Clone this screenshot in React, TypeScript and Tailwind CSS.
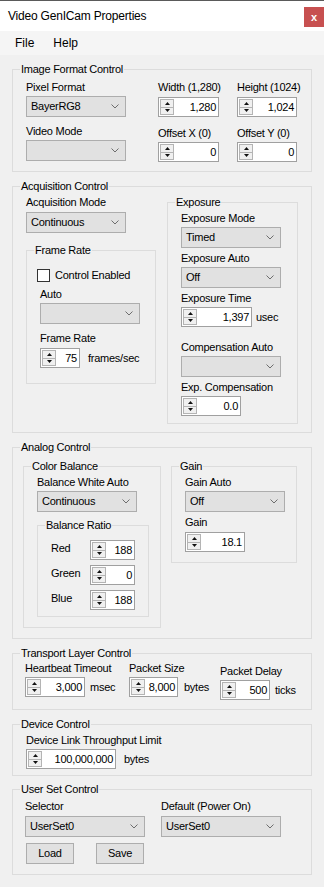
import React from "react";

const Chevron = () => (
  <svg width="8" height="5" viewBox="0 0 8 5" className="shrink-0">
    <polyline points="0.5,0.5 4,4 7.5,0.5" fill="none" stroke="#6d6d6d" strokeWidth="1" />
  </svg>
);

function Combo({ value = "", w = "w-[100px]" }: { value?: string; w?: string }) {
  return (
    <div className={`${w} h-[21px] bg-[#e1e1e1] border border-[#adadad] flex items-center justify-between pl-[4px] pr-[6px] shrink-0`}>
      <span className="leading-[13px] whitespace-nowrap">{value}</span>
      <Chevron />
    </div>
  );
}

function Spin({ value, w }: { value: string; w: string }) {
  return (
    <div className={`${w} h-[20px] bg-white border border-[#a0a0a0] flex items-stretch p-px shrink-0`}>
      <div className="w-[14px] flex flex-col border border-[#b4b4b4] bg-[#f0f0f0]">
        <div className="flex-1 flex items-center justify-center">
          <svg width="5" height="3" viewBox="0 0 5 3">
            <polygon points="2.5,0 5,3 0,3" fill="#111" />
          </svg>
        </div>
        <div className="h-px bg-[#b4b4b4]" />
        <div className="flex-1 flex items-center justify-center">
          <svg width="5" height="3" viewBox="0 0 5 3">
            <polygon points="0,0 5,0 2.5,3" fill="#111" />
          </svg>
        </div>
      </div>
      <div className="flex-1 text-right pr-[1px] leading-[16px] whitespace-nowrap">{value}</div>
    </div>
  );
}

function Label({ children, className = "" }: { children: React.ReactNode; className?: string }) {
  return <div className={`h-[13px] leading-[13px] whitespace-nowrap ${className}`}>{children}</div>;
}

function Group({ label, className = "", children }: { label: string; className?: string; children?: React.ReactNode }) {
  return (
    <div className={`relative border border-[#dcdcdc] shrink-0 ${className}`}>
      <span className="absolute left-[7px] top-[-7px] px-px bg-[#f0f0f0] leading-[13px] whitespace-nowrap">{label}</span>
      {children}
    </div>
  );
}

function Button({ children, className = "" }: { children: React.ReactNode; className?: string }) {
  return (
    <div className={`w-[48px] h-[21px] bg-[#e1e1e1] border border-[#adadad] flex items-center justify-center leading-[13px] ${className}`}>
      {children}
    </div>
  );
}

export default function App() {
  return (
    <div className="w-[324px] h-[887px] bg-[#f0f0f0] text-black text-[11px] tracking-[-0.25px] font-['Liberation_Sans',Arial,sans-serif] overflow-hidden">
      {/* Title bar */}
      <div className="h-[31px] bg-white border-t border-[#5a5a5a] flex items-start">
        <div className="ml-[8px] mt-[7px] text-[12px] leading-[16px] tracking-[-0.2px]">Video GenICam Properties</div>
        <div className="ml-auto mt-[6px] w-[20px] h-[20px] bg-[#c75050] flex items-center justify-center text-white text-[11px] font-bold leading-none">
          x
        </div>
      </div>
      {/* Menu bar */}
      <div className="h-[24px] bg-[#f5f5f5] flex items-center text-[12px] tracking-normal">
        <span className="ml-[15px]">File</span>
        <span className="ml-[19px]">Help</span>
      </div>

      <div className="flex flex-col pl-[12px]">
        {/* Image Format Control */}
        <Group label="Image Format Control" className="mt-[14px] w-[300px] h-[103px]">
          <div className="flex pl-[13px] pt-[11px]">
            <div className="w-[100px] flex flex-col">
              <Label>Pixel Format</Label>
              <div className="mt-[2px]"><Combo value="BayerRG8" /></div>
              <Label className="mt-[8px]">Video Mode</Label>
              <div className="mt-[2px]"><Combo /></div>
            </div>
            <div className="ml-[32px] w-[61px] flex flex-col">
              <Label>Width (1,280)</Label>
              <div className="mt-[3px]"><Spin value="1,280" w="w-[61px]" /></div>
              <Label className="mt-[10px]">Offset X (0)</Label>
              <div className="mt-[2px]"><Spin value="0" w="w-[61px]" /></div>
            </div>
            <div className="ml-[18px] w-[60px] flex flex-col">
              <Label>Height (1024)</Label>
              <div className="mt-[3px]"><Spin value="1,024" w="w-[60px]" /></div>
              <Label className="mt-[10px]">Offset Y (0)</Label>
              <div className="mt-[2px]"><Spin value="0" w="w-[60px]" /></div>
            </div>
          </div>
        </Group>

        {/* Acquisition Control */}
        <Group label="Acquisition Control" className="mt-[14px] w-[300px] h-[247px]">
          <div className="flex items-start pl-[13px]">
            <div className="mt-[9px] w-[130px] flex flex-col">
              <Label>Acquisition Mode</Label>
              <div className="mt-[3px]"><Combo value="Continuous" /></div>
              <Group label="Frame Rate" className="mt-[17px] w-[130px] h-[134px]">
                <div className="flex flex-col pt-[18px]">
                  <div className="flex items-center ml-[10px] h-[13px]">
                    <div className="w-[13px] h-[13px] bg-white border border-[#333333]" />
                    <span className="ml-[5px] leading-[13px]">Control Enabled</span>
                  </div>
                  <Label className="mt-[6px] ml-[13px]">Auto</Label>
                  <div className="mt-[2px] ml-[13px]"><Combo /></div>
                  <Label className="mt-[8px] ml-[13px]">Frame Rate</Label>
                  <div className="mt-[3px] ml-[13px] flex items-center">
                    <Spin value="75" w="w-[40px]" />
                    <span className="ml-[8px] leading-[13px]">frames/sec</span>
                  </div>
                </div>
              </Group>
            </div>
            <Group label="Exposure" className="mt-[15px] ml-[11px] w-[131px] h-[222px]">
              <div className="flex flex-col pl-[13px] pt-[9px]">
                <Label>Exposure Mode</Label>
                <div className="mt-[2px]"><Combo value="Timed" /></div>
                <Label className="mt-[4px]">Exposure Auto</Label>
                <div className="mt-[2px]"><Combo value="Off" /></div>
                <Label className="mt-[4px]">Exposure Time</Label>
                <div className="mt-[2px] flex items-center">
                  <Spin value="1,397" w="w-[71px]" />
                  <span className="ml-[4px] leading-[13px]">usec</span>
                </div>
                <Label className="mt-[14px]">Compensation Auto</Label>
                <div className="mt-[2px]"><Combo /></div>
                <Label className="mt-[4px]">Exp. Compensation</Label>
                <div className="mt-[2px]"><Spin value="0.0" w="w-[60px]" /></div>
              </div>
            </Group>
          </div>
        </Group>

        {/* Analog Control */}
        <Group label="Analog Control" className="mt-[14px] w-[300px] h-[192px]">
          <div className="flex items-start pl-[10px] pt-[18px]">
            <Group label="Color Balance" className="w-[138px] h-[162px]">
              <div className="flex flex-col pl-[13px] pt-[9px]">
                <Label>Balance White Auto</Label>
                <div className="mt-[2px]"><Combo value="Continuous" /></div>
                <Group label="Balance Ratio" className="mt-[13px] w-[112px] h-[92px]">
                  <div className="flex flex-col gap-[5px] pl-[13px] pt-[14px]">
                    {[
                      ["Red", "188"],
                      ["Green", "0"],
                      ["Blue", "188"],
                    ].map(([n, v]) => (
                      <div key={n} className="flex items-center h-[20px]">
                        <span className="w-[39px] leading-[13px] mb-[4px]">{n}</span>
                        <Spin value={v} w="w-[45px]" />
                      </div>
                    ))}
                  </div>
                </Group>
              </div>
            </Group>
            <Group label="Gain" className="ml-[10px] w-[126px] h-[97px]">
              <div className="flex flex-col pl-[13px] pt-[9px]">
                <Label>Gain Auto</Label>
                <div className="mt-[2px]"><Combo value="Off" /></div>
                <Label className="mt-[4px]">Gain</Label>
                <div className="mt-[3px]"><Spin value="18.1" w="w-[60px]" /></div>
              </div>
            </Group>
          </div>
        </Group>

        {/* Transport Layer Control */}
        <Group label="Transport Layer Control" className="mt-[14px] w-[300px] h-[57px]">
          <div className="flex items-start pl-[12px] pt-[8px]">
            <div className="w-[104px] flex flex-col">
              <Label>Heartbeat Timeout</Label>
              <div className="mt-[2px] flex items-center">
                <Spin value="3,000" w="w-[60px]" />
                <span className="ml-[5px] leading-[13px]">msec</span>
              </div>
            </div>
            <div className="w-[91px] flex flex-col">
              <Label>Packet Size</Label>
              <div className="mt-[2px] flex items-center">
                <Spin value="8,000" w="w-[49px]" />
                <span className="ml-[6px] leading-[13px]">bytes</span>
              </div>
            </div>
            <div className="mt-[3px] flex flex-col">
              <Label>Packet Delay</Label>
              <div className="mt-[2px] flex items-center">
                <Spin value="500" w="w-[50px]" />
                <span className="ml-[5px] leading-[13px]">ticks</span>
              </div>
            </div>
          </div>
        </Group>

        {/* Device Control */}
        <Group label="Device Control" className="mt-[14px] w-[300px] h-[52px]">
          <div className="flex flex-col pl-[13px] pt-[9px]">
            <Label>Device Link Throughput Limit</Label>
            <div className="mt-[2px] flex items-center">
              <Spin value="100,000,000" w="w-[90px]" />
              <span className="ml-[8px] leading-[13px]">bytes</span>
            </div>
          </div>
        </Group>

        {/* User Set Control */}
        <Group label="User Set Control" className="mt-[13px] w-[300px] h-[86px]">
          <div className="flex flex-col pt-[10px]">
            <div className="flex items-start pl-[12px]">
              <div className="flex flex-col w-[120px]">
                <Label>Selector</Label>
                <div className="mt-[3px]"><Combo value="UserSet0" w="w-[120px]" /></div>
              </div>
              <div className="ml-[16px] flex flex-col w-[120px]">
                <Label>Default (Power On)</Label>
                <div className="mt-[3px]"><Combo value="UserSet0" w="w-[120px]" /></div>
              </div>
            </div>
            <div className="mt-[6px] pl-[13px] flex">
              <Button>Load</Button>
              <Button className="ml-[22px]">Save</Button>
            </div>
          </div>
        </Group>
      </div>
    </div>
  );
}
